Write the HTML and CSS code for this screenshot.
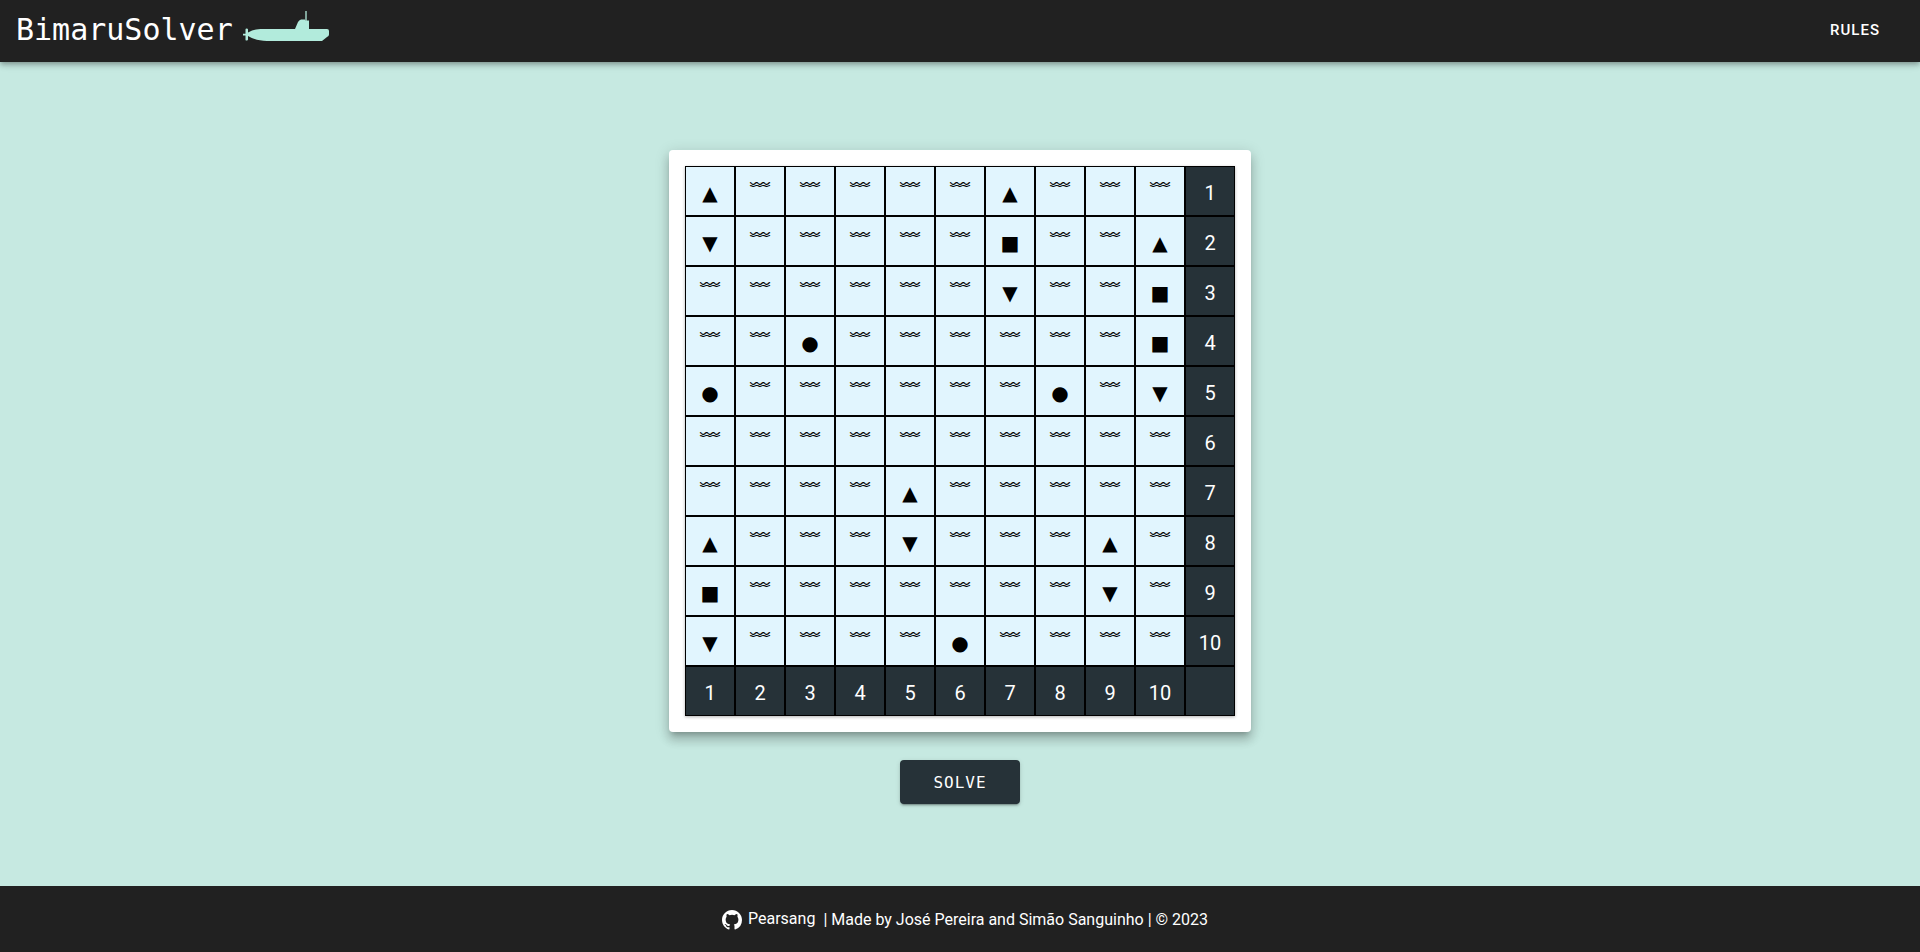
FILE: index.html
```html
<!DOCTYPE html>
<html lang="en">
<head>
<meta charset="utf-8">
<title>BimaruSolver</title>
<link rel="stylesheet" href="styles.css">
</head>
<body>
<header class="navbar">
  <a class="brand" href="#">BimaruSolver
    <svg class="submarine" viewBox="0 0 88 32" aria-hidden="true">
      <path fill="#b2ebdc" d="M0 22.700H2.500V18.500Q2.500 17.500 3.700 17.500T5 18.500V21.500C10 19 14 18 20 18H52L55 11Q56 9 58 8.500H62V9.500H66V18H84Q86 18 86 20V23.500Q86 25 84 26L79 30H24C16 30 10 28 5 25V28.500Q5 29.500 3.700 29.500T2.500 28.500V24.500H0Z"/>
      <path fill="#b2ebdc" opacity=".65" d="M62 0H64V10H62Z"/>
    </svg>
  </a>
  <nav><a class="nav-link" href="#">RULES</a></nav>
</header>
<main class="content">
  <div class="card"><table class="board"><tbody id="board"></tbody></table></div>
  <button class="solve" type="button">SOLVE</button>
</main>
<footer class="footer">
  <a class="author" href="#">
    <svg class="github" viewBox="0 0 16 16" aria-hidden="true"><path fill="#fff" d="M8 0C3.580 0 0 3.580 0 8c0 3.540 2.290 6.530 5.470 7.590.4.070.550-.170.550-.380 0-.190-.010-.820-.010-1.490-2.010.370-2.530-.490-2.690-.940-.090-.230-.480-.940-.820-1.130-.280-.150-.680-.520-.010-.530.630-.010 1.080.580 1.230.820.720 1.210 1.870.870 2.330.660.070-.520.280-.870.510-1.070-1.780-.200-3.640-.890-3.640-3.950 0-.870.310-1.590.820-2.150-.080-.200-.360-1.020.080-2.120 0 0 .670-.210 2.200.820a7.600 7.600 0 0 1 4 0c1.530-1.040 2.200-.820 2.200-.820.440 1.100.160 1.920.080 2.120.510.560.820 1.270.820 2.150 0 3.070-1.870 3.750-3.650 3.950.290.250.540.730.540 1.480 0 1.070-.010 1.930-.010 2.200 0 .210.150.460.550.380A8.010 8.010 0 0 0 16 8c0-4.420-3.580-8-8-8Z"/></svg>
    <span class="author-name">Pearsang</span>
  </a>
  <span>| Made by José Pereira and Simão Sanguinho | © 2023</span>
</footer>
<script src="board.js"></script>
</body>
</html>
```
FILE: styles.css
```css
* { box-sizing: border-box; }
body {
  margin: 0;
  min-height: 100vh;
  display: flex;
  flex-direction: column;
  background: #c6e9e1;
  color: #fff;
  font: 16px/24px Roboto, sans-serif;
}
a { color: inherit; text-decoration: none; }
.navbar {
  display: flex;
  align-items: center;
  justify-content: space-between;
  height: 62px;
  padding: 0 40px 2px 16px;
  background: #212121;
  box-shadow: 0 2px 4px -1px rgba(0, 0, 0, .2), 0 4px 5px rgba(0, 0, 0, .14), 0 1px 10px rgba(0, 0, 0, .12);
}
.brand {
  display: flex;
  align-items: center;
  gap: 10px;
  font: 30px/36px "DejaVu Sans Mono", monospace;
}
.submarine { width: 88px; height: 32px; margin-bottom: 6px; }
.nav-link { font-size: 15px; font-weight: 500; letter-spacing: 1px; }
.content {
  flex: 1;
  display: flex;
  flex-direction: column;
  align-items: center;
  justify-content: center;
  gap: 28px;
  padding-top: 6px;
}
.card {
  padding: 16px;
  background: #fff;
  border-radius: 4px;
  box-shadow: 0 5px 5px -3px rgba(0, 0, 0, .2), 0 8px 10px 1px rgba(0, 0, 0, .14), 0 3px 14px 2px rgba(0, 0, 0, .12);
}
.board {
  border-spacing: 0;
  box-shadow: 0 1px 3px rgba(0, 0, 0, .3);
}
.board td, .board th {
  width: 50px;
  height: 50px;
  padding: 0;
  border: 1px solid #000;
  background: #e1f5fe;
  color: #000;
  font-size: 20px;
  font-weight: 400;
  text-align: center;
}
.board th {
  padding-top: 4px;
  background: #263238;
  color: #fff;
}
.board .ship {
  padding-top: 4px;
  font-family: "DejaVu Sans", sans-serif;
}
.board .water {
  padding-top: 2px;
  font-family: "Noto Sans CJK JP", sans-serif;
}
.solve {
  min-width: 120px;
  height: 44px;
  padding-top: 2px;
  border: 0;
  border-radius: 4px;
  background: #263238;
  color: #fff;
  font: 16px/24px "DejaVu Sans Mono", monospace;
  letter-spacing: 1px;
  box-shadow: 0 3px 1px -2px rgba(0, 0, 0, .2), 0 2px 2px rgba(0, 0, 0, .14), 0 1px 5px rgba(0, 0, 0, .12);
}
.footer {
  display: flex;
  align-items: center;
  justify-content: center;
  gap: 8px;
  height: 66px;
  padding: 2px 0 0 10px;
  background: #212121;
}
.author { display: flex; align-items: center; gap: 6px; }
.author-name { padding-bottom: 2px; }
.github { width: 20px; height: 20px; }
```
FILE: board.js
```js
const rows = [
  'A.....A...',
  'V.....S..A',
  '......V..S',
  '..O......S',
  'O......O.V',
  '..........',
  '....A.....',
  'A...V...A.',
  'S.......V.',
  'V....O....'
];
const glyphs = { A: '▲', V: '▼', S: '■', O: '●' };
const water = '<td class="water">﹌</td>';
const body = document.getElementById('board');

body.innerHTML = rows.map((row, i) =>
  '<tr>' + [...row].map(c => c === '.' ? water : `<td class="ship">${glyphs[c]}</td>`).join('') +
  `<th scope="row">${i + 1}</th></tr>`
).join('') + '<tr>' + rows.map((_, i) => `<th scope="col">${i + 1}</th>`).join('') + '<th></th></tr>';
```
